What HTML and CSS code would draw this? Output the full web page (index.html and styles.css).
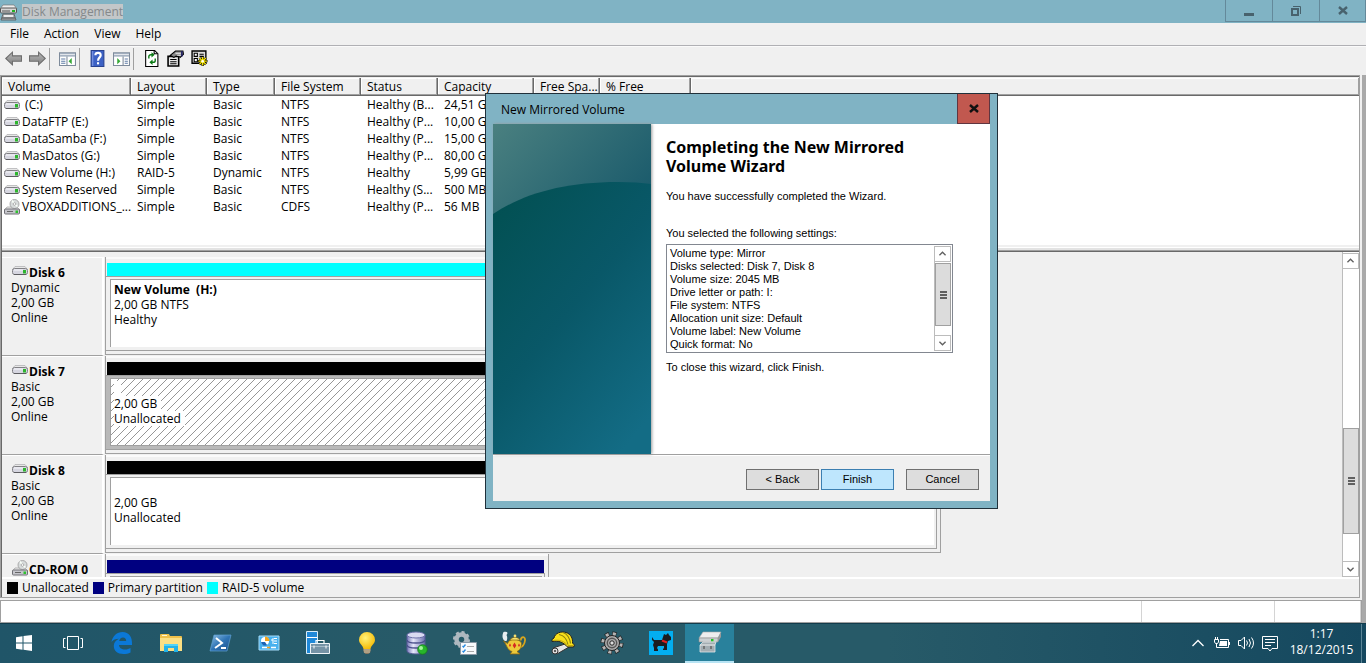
FILE: index.html
```html
<!DOCTYPE html>
<html lang="en">
<head>
<meta charset="utf-8">
<title>Disk Management</title>
<link rel="stylesheet" href="styles.css">
</head>
<body>
<svg class="defs" aria-hidden="true">
  <defs>
    <linearGradient id="db" x1="0" y1="0" x2="1" y2="0"><stop offset="0" stop-color="#7579b8"/><stop offset=".35" stop-color="#e6e7fa"/><stop offset="1" stop-color="#6a6fae"/></linearGradient>
    <radialGradient id="bulb" cx=".4" cy=".35" r=".7"><stop offset="0" stop-color="#fff27a"/><stop offset="1" stop-color="#f5b800"/></radialGradient>
    <linearGradient id="shell" x1="0" y1="0" x2="1" y2="1"><stop offset="0" stop-color="#8fc0e6"/><stop offset=".5" stop-color="#2f74b5"/><stop offset="1" stop-color="#1c4f8c"/></linearGradient>
    <linearGradient id="arrow" x1="0" y1="0" x2="0" y2="1"><stop offset="0" stop-color="#b8b8b8"/><stop offset="1" stop-color="#808080"/></linearGradient>
  </defs>
  <symbol id="drive" viewBox="0 0 16 16">
    <path d="M3 3.500h10l2.500 3H.5z" fill="#e8e8e8" stroke="#b4b4b6" stroke-width=".8"/>
    <rect x=".5" y="5.500" width="15" height="6" rx="2" fill="#d6d6e0" stroke="#808084"/>
    <path d="M2 7h9" stroke="#f8f8fc"/>
    <path d="M2 11.500h12" stroke="#5c5c60"/>
    <rect x="11" y="7" width="3" height="3.500" fill="#2db52d"/>
  </symbol>
  <symbol id="cdrom" viewBox="0 0 16 16">
    <path d="M3 8h10l2.500 3H.5z" fill="#eee" stroke="#999" stroke-width=".7"/>
    <circle cx="10.500" cy="5" r="4.500" fill="#d8dcdc" stroke="#999" stroke-width=".8"/>
    <path d="M10.500 5L8 1.500M10.500 5l3 2.500" stroke="#f8fff8" stroke-width="1.500"/>
    <circle cx="10.500" cy="5" r="1.300" fill="#fff" stroke="#888" stroke-width=".6"/>
    <rect x=".5" y="10" width="15" height="5" rx="1" fill="#c6c6cc" stroke="#707076"/>
    <path d="M3 12.500h6" stroke="#666"/>
    <rect x="11.500" y="11.500" width="2.500" height="2.500" fill="#2dc22d"/>
  </symbol>
  <symbol id="up" viewBox="0 0 16 16"><path d="M4.500 9.500L8 6l3.500 3.500" fill="none" stroke="#606060" stroke-width="1.500"/></symbol>
  <symbol id="down" viewBox="0 0 16 16"><path d="M4.500 6.500L8 10l3.500-3.500" fill="none" stroke="#606060" stroke-width="1.500"/></symbol>
</svg>

<div class="desktop">
  <header class="titlebar">
    <svg class="app-icon" viewBox="0 0 18 18"><path d="M3 2h11l3 4H0z" fill="#eee" stroke="#777" stroke-width=".7"/><rect x=".5" y="5" width="16" height="5" rx="1" fill="#d5d5d5" stroke="#555"/><path d="M2 8h8" stroke="#555"/><rect x="12" y="7" width="3" height="2" fill="#22b022"/><path d="M3 11h11l2 6H1z" fill="#aeb4b8" stroke="#555" stroke-width=".8"/><path d="M4 13h9" stroke="#fff" stroke-width="1.500"/><path d="M2 15h13" stroke="#444"/></svg>
    <h1 class="window-title">Disk Management</h1>
    <div class="window-buttons">
      <button class="win-btn" aria-label="Minimize"><svg viewBox="0 0 16 16"><path d="M3 10h10v3H3z" fill="#48626d"/></svg></button>
      <button class="win-btn" aria-label="Restore"><svg viewBox="0 0 16 16"><path d="M4 6h6v6H4z" fill="none" stroke="#48626d" stroke-width="2"/><path d="M5 3.500h7.500V11" fill="none" stroke="#48626d"/></svg></button>
      <button class="win-btn" aria-label="Close"><svg viewBox="0 0 16 16"><path d="M4 4l8 7M12 4l-8 7" stroke="#48626d" stroke-width="2.400"/></svg></button>
    </div>
  </header>

  <nav class="menubar">
    <button class="menu">File</button><button class="menu">Action</button><button class="menu">View</button><button class="menu">Help</button>
  </nav>

  <div class="toolbar">
    <button class="tool" aria-label="Back"><svg viewBox="0 0 16 16"><path d="M.7 8L7 2v3.500h8.500v5H7V14z" fill="url(#arrow)" stroke="#6e6e6e"/></svg></button>
    <button class="tool" aria-label="Forward"><svg viewBox="0 0 16 16"><path d="M15.300 8L9 2v3.500H.5v5H9V14z" fill="url(#arrow)" stroke="#6e6e6e"/></svg></button>
    <span class="tool-sep"></span>
    <button class="tool" aria-label="Show console tree"><svg viewBox="0 0 16 16"><path d="M.5 2.500h15v12H.5z" fill="#fff" stroke="#7e8b9b"/><path d="M1 3.500h14M1 5.500h14" stroke="#8a9bb0"/><path d="M7.500 6v8" stroke="#7e8b9b"/><path d="M2 8.500h4M2 10.500h4M2 12.500h4" stroke="#5e7ba5"/><path d="M12 7.500v6l-3-3z" fill="#35a835"/></svg></button>
    <span class="tool-sep"></span>
    <button class="tool" aria-label="Help"><svg viewBox="0 0 16 16"><path d="M2 .5h12v15H2z" fill="#3c61c4" stroke="#27418e"/><path d="M3.500 1v14" stroke="#7f9be6"/><path d="M6 5c0-3 5-3 5 0 0 2-2.500 2-2.500 5" fill="none" stroke="#fff" stroke-width="2"/><path d="M7.500 11.500h2v2h-2z" fill="#fff"/></svg></button>
    <button class="tool" aria-label="Show action pane"><svg viewBox="0 0 16 16"><path d="M.5 2.500h15v12H.5z" fill="#fff" stroke="#7e8b9b"/><path d="M1 3.500h14M1 5.500h14" stroke="#8a9bb0"/><path d="M9.500 6v8" stroke="#7e8b9b"/><path d="M11 8.500h3M11 10.500h3M11 12.500h3" stroke="#5e7ba5"/><path d="M4 7.500v6l3-3z" fill="#35a835"/></svg></button>
    <span class="tool-sep"></span>
    <button class="tool" aria-label="Refresh"><svg viewBox="0 0 16 16"><path d="M2.500.5H11l3 3v12H2.500z" fill="#fff" stroke="#000"/><path d="M10.500.5v3h3" fill="none" stroke="#000"/><path d="M5.500 8V6q0-1.500 2-1.500h1M11.500 8v2q0 1.500-2 1.500h-1" fill="none" stroke="#0a7a14" stroke-width="1.300"/><path d="M8 2v5l3-2.500zM9 9v5l-3-2.500z" fill="#0a7a14"/></svg></button>
    <button class="tool" aria-label="Properties"><svg viewBox="0 0 16 16"><path d="M1 6h10v9H1z" fill="#e8e8e8" stroke="#000" stroke-width="1.500"/><path d="M3 9h6M3 11h6M3 13h6" stroke="#000"/><path d="M3 5l5-4h7l.5 3-3 3-3-2-3 2z" fill="#888" stroke="#000"/><path d="M8 3h5M9 5h4" stroke="#eee"/><path d="M14 1v5" stroke="#226" stroke-width="1.500"/></svg></button>
    <button class="tool" aria-label="Settings"><svg viewBox="0 0 16 16"><path d="M1 1h13v11.500H1z" fill="#ddd" stroke="#000" stroke-width="1.300"/><path d="M3 3h3v3H3zM3 8h3v3H3z" fill="#fff" stroke="#000"/><path d="M8 4h4M8 6h4" stroke="#000"/><path d="M11 6v9M6.500 10.500h9M8 7.500l6 6M14 7.500l-6 6" stroke="#000" stroke-width="2.200"/><path d="M11 6.500v8M7 10.500h8M8 7.500l6 6M14 7.500l-6 6" stroke="#f6e400" stroke-width="1.300"/><circle cx="11" cy="10.500" r="1.200" fill="#fff"/></svg></button>
  </div>

  <div class="workspace">
    <div class="window-body">
      <main class="main">
        <section class="volumes">
          <table class="volume-table">
            <colgroup><col class="c-volume"><col class="c-layout"><col class="c-type"><col class="c-fs"><col class="c-status"><col class="c-capacity"><col class="c-free"><col class="c-pct"><col></colgroup>
            <thead><tr><th>Volume</th><th>Layout</th><th>Type</th><th>File System</th><th>Status</th><th>Capacity</th><th>Free Spa...</th><th>% Free</th><th></th></tr></thead>
            <tbody>
              <tr><td><svg class="vol-icon"><use href="#drive"/></svg>&nbsp;(C:)</td><td>Simple</td><td>Basic</td><td>NTFS</td><td>Healthy (B...</td><td>24,51 GB</td><td></td><td></td><td></td></tr>
              <tr><td><svg class="vol-icon"><use href="#drive"/></svg>DataFTP (E:)</td><td>Simple</td><td>Basic</td><td>NTFS</td><td>Healthy (P...</td><td>10,00 GB</td><td></td><td></td><td></td></tr>
              <tr><td><svg class="vol-icon"><use href="#drive"/></svg>DataSamba (F:)</td><td>Simple</td><td>Basic</td><td>NTFS</td><td>Healthy (P...</td><td>15,00 GB</td><td></td><td></td><td></td></tr>
              <tr><td><svg class="vol-icon"><use href="#drive"/></svg>MasDatos (G:)</td><td>Simple</td><td>Basic</td><td>NTFS</td><td>Healthy (P...</td><td>80,00 GB</td><td></td><td></td><td></td></tr>
              <tr><td><svg class="vol-icon"><use href="#drive"/></svg>New Volume (H:)</td><td>RAID-5</td><td>Dynamic</td><td>NTFS</td><td>Healthy</td><td>5,99 GB</td><td></td><td></td><td></td></tr>
              <tr><td><svg class="vol-icon"><use href="#drive"/></svg>System Reserved</td><td>Simple</td><td>Basic</td><td>NTFS</td><td>Healthy (S...</td><td>500 MB</td><td></td><td></td><td></td></tr>
              <tr><td><svg class="vol-icon"><use href="#cdrom"/></svg>VBOXADDITIONS_...</td><td>Simple</td><td>Basic</td><td>CDFS</td><td>Healthy (P...</td><td>56 MB</td><td></td><td></td><td></td></tr>
            </tbody>
          </table>
        </section>
        <div class="splitter"></div>
        <section class="graph">
          <div class="disks">
            <article class="disk">
              <div class="disk-label"><h2 class="disk-name"><svg class="disk-icon"><use href="#drive"/></svg>Disk 6</h2><p>Dynamic</p><p>2,00 GB</p><p>Online</p></div>
              <div class="disk-area"><div class="bar raid"></div><div class="partition"><div class="partition-box"><p class="vol-name">New Volume&nbsp; (H:)</p><p>2,00 GB NTFS</p><p>Healthy</p></div></div></div>
            </article>
            <article class="disk">
              <div class="disk-label"><h2 class="disk-name"><svg class="disk-icon"><use href="#drive"/></svg>Disk 7</h2><p>Basic</p><p>2,00 GB</p><p>Online</p></div>
              <div class="disk-area"><div class="bar unallocated"></div><div class="partition selected"><div class="partition-box hatched"><p class="blank">&nbsp;</p><p>2,00 GB</p><p>Unallocated</p></div></div></div>
            </article>
            <article class="disk">
              <div class="disk-label"><h2 class="disk-name"><svg class="disk-icon"><use href="#drive"/></svg>Disk 8</h2><p>Basic</p><p>2,00 GB</p><p>Online</p></div>
              <div class="disk-area"><div class="bar unallocated"></div><div class="partition"><div class="partition-box"><p class="blank">&nbsp;</p><p>2,00 GB</p><p>Unallocated</p></div></div></div>
            </article>
            <article class="disk">
              <div class="disk-label"><h2 class="disk-name"><svg class="disk-icon"><use href="#cdrom"/></svg>CD-ROM 0</h2></div>
              <div class="disk-area small"><div class="bar primary"></div><div class="partition"><div class="partition-box"></div></div></div>
            </article>
          </div>
          <div class="scrollbar">
            <button class="scroll-btn" aria-label="Scroll up"><svg><use href="#up"/></svg></button>
            <div class="track"><div class="thumb"><span class="grip"></span></div></div>
            <button class="scroll-btn" aria-label="Scroll down"><svg><use href="#down"/></svg></button>
          </div>
        </section>
        <div class="legend">
          <span class="key"><i class="swatch unallocated"></i>Unallocated</span>
          <span class="key"><i class="swatch primary"></i>Primary partition</span>
          <span class="key"><i class="swatch raid"></i>RAID-5 volume</span>
        </div>
      </main>
      <footer class="statusbar"><span class="pane grow"></span><span class="pane mid"></span><span class="pane last"></span></footer>
    </div>
    <div class="gutter"></div>
  </div>

  <div class="taskbar">
    <button class="task start" aria-label="Start"><svg viewBox="0 0 24 24"><path d="M4 6.200l6.500-.9V11.500H4zM11.500 5.100L20 4v7.500h-8.500zM4 12.500h6.500v6.200L4 17.800zM11.500 12.500H20V20l-8.500-1.200z" fill="#fff"/></svg></button>
    <button class="task" aria-label="Task View"><svg viewBox="0 0 24 24"><path d="M6.500 5.500h11v13h-11zM4.500 7.500h-2v9h2M19.500 7.500h2v9h-2" fill="none" stroke="#fff"/></svg></button>
    <button class="task" aria-label="Edge"><svg viewBox="0 0 24 24"><path d="M1.500 11C2.500 5 7 1 12.500 1 19 1 22.500 6 22 14H9c.2 3 2.800 4.500 6 4.500 2.200 0 4-.6 5.500-1.500v4.500C18.500 22.600 16 23 13.500 23 7.500 23 3.500 19.500 3.800 14.500 4 11.500 6 9 9 7.800 5.600 7.800 3.200 9 1.500 11zM9.200 10h7c0-2.300-1.200-3.600-3.200-3.600S9.500 7.800 9.200 10z" fill="#0b78d7"/></svg></button>
    <button class="task" aria-label="File Explorer"><svg viewBox="0 0 24 24"><path d="M1 4q0-1 1-1h8l1 2h11q1 0 1 1v14H1z" fill="#efc04a"/><path d="M1 7h22v13H1z" fill="#fbdf83"/><path d="M3 4.500h5" stroke="#fff6d0"/><path d="M5 21v-8h14v8h-4v-4H9v4z" fill="#23b3e8"/><path d="M5 13h14v2H5z" fill="#52d3f7"/></svg></button>
    <button class="task" aria-label="PowerShell"><svg viewBox="0 0 24 24"><path d="M6 4h17l-4 16H2z" fill="url(#shell)" stroke="#5fa0d2" stroke-width=".7"/><path d="M8 7l6 5-7 5" fill="none" stroke="#fff" stroke-width="2"/><path d="M13 17h5" stroke="#fff" stroke-width="2"/></svg></button>
    <button class="task" aria-label="Control Panel"><svg viewBox="0 0 24 24"><path d="M2 5h20v14H2z" fill="#48b1ee" stroke="#a5dcfa"/><circle cx="8" cy="10" r="4" fill="#fff"/><path d="M8 10V5.500a4.500 4.500 0 0 1 4.500 4.500z" fill="#f3a51d"/><path d="M8 11H4a4 4 0 0 0 6 3z" fill="#1b63b5"/><path d="M14 9h2M17 7.500h3M17 10h3M17 12.500h3M16 7v6" stroke="#fff"/><path d="M5 16.500h7M14 16.500h5" stroke="#fff" stroke-width="1.500"/><path d="M10 16.500h3" stroke="#f3a51d" stroke-width="1.500"/></svg></button>
    <button class="task" aria-label="Server Manager"><svg viewBox="0 0 24 24"><path d="M.5.500h11v22H.5z" fill="#1e88d8" stroke="#d9edf9"/><path d="M1 6.500h10" stroke="#fff"/><path d="M10 12v-2.500h8V12" fill="none" stroke="#fff" stroke-width="1.200"/><path d="M4.500 12.500h19v10h-19z" fill="#7593a6" stroke="#eef5f8"/><path d="M5 15.500h18" stroke="#a5bbc8"/><path d="M8 14.500v3M20 14.500v3" stroke="#fff"/></svg></button>
    <button class="task" aria-label="Tips"><svg viewBox="0 0 24 24"><path d="M12 1a8 8 0 0 0-8 8c0 4 4 5 4.500 9h7c.5-4 4.500-5 4.500-9a8 8 0 0 0-8-8z" fill="url(#bulb)"/><path d="M8.500 18h7v3l-2 2h-3l-2-2z" fill="#877760"/><path d="M8.500 19h7M9 21h6" stroke="#d9caa8"/></svg></button>
    <button class="task" aria-label="Database"><svg viewBox="0 0 24 24"><path d="M3 4v16c0 4 18 4 18 0V4z" fill="url(#db)" stroke="#565b94"/><ellipse cx="12" cy="4" rx="9" ry="3" fill="#d9daf2" stroke="#6a6fa8"/><path d="M3 9c0 4 18 4 18 0M3 14c0 4 18 4 18 0" fill="none" stroke="#4b508c" stroke-width="1.300"/><circle cx="18.500" cy="18.500" r="4.800" fill="#27b52a" stroke="#16781a" stroke-width=".8"/><circle cx="17" cy="17" r="2" fill="#a3f59b"/></svg></button>
    <button class="task" aria-label="Services"><svg viewBox="0 0 24 24"><circle cx="8.500" cy="8.500" r="5" fill="none" stroke="#aeb8bf" stroke-width="4.500"/><circle cx="8.500" cy="8.500" r="7.300" fill="none" stroke="#aeb8bf" stroke-width="2.500" stroke-dasharray="3 2.700"/><path d="M7.500 11.500h16v12h-16z" fill="#f8fafc" stroke="#8998a5"/><path d="M9.500 15l1 1 2-2.500M9.500 20l1 1 2-2.500" fill="none" stroke="#2688df" stroke-width="1.300"/><path d="M14 15.500h7M14 20.500h7" stroke="#aaa"/></svg></button>
    <button class="task" aria-label="Lamp"><svg viewBox="0 0 24 24"><path d="M3 10C0 8 0 4 1.500 1c4-1 5 1 3 3 1 2 1 4 0 6z" fill="#e8edf0"/><path d="M18.500 9.500c1-5 5-4 4.500 0s-2 6-5 7" fill="none" stroke="#d7a51e" stroke-width="1.800"/><path d="M1.500 10l4 2.500C7 7 17 7 19.500 12c0 5-1.500 7-4.500 8.500l3 2.500H8l2-2.500C5 19 5.500 15 1.500 10z" fill="#edc93a" stroke="#8a6510" stroke-width=".8"/><path d="M8 9c1-3.500 9-3.500 10 0z" fill="#f8e470" stroke="#8a6510" stroke-width=".7"/><circle cx="13" cy="5" r="1.400" fill="#f6df6e"/><path d="M12.500 11.500l1.800 3-1.800 3-1.800-3zM8 12.500l1 1.800-1 1.800-1-1.800zM17 12.500l1 1.800-1 1.800-1-1.800z" fill="#d42a22"/></svg></button>
    <button class="task" aria-label="Builder"><svg viewBox="0 0 24 24"><path d="M2 17l12-4 4 3L6 23z" fill="#e6e6e6" stroke="#333"/><circle cx="4" cy="20" r="3" fill="#ddd" stroke="#333"/><circle cx="4" cy="20" r="1" fill="#333"/><path d="M3 7C4 2 10 0 15 1.500 20 3 22 8 21.500 12l2 2-1 2h-6C12 11 8 9.500 1 10.500V8.500z" fill="#f9e11a" stroke="#222"/><path d="M8 3.500c5 1 8 5 9 10M12 1.500c4 1 7 6 7.500 11" fill="none" stroke="#8b8010" stroke-width="1.100"/><path d="M2 9.500c7-1 11 .5 15 5h5" fill="none" stroke="#c4a90c"/></svg></button>
    <button class="task" aria-label="System settings"><svg viewBox="0 0 24 24"><circle cx="12" cy="12" r="9" fill="none" stroke="#222" stroke-width="5" stroke-dasharray="4 3.070"/><circle cx="12" cy="12" r="9" fill="none" stroke="#b4b4b4" stroke-width="3.500" stroke-dasharray="3 4.070" stroke-dashoffset="-.5"/><circle cx="12" cy="12" r="7.500" fill="#aaa" stroke="#222"/><circle cx="12" cy="12" r="4.700" fill="none" stroke="#555" stroke-width="1.400"/><circle cx="12" cy="12" r="2.200" fill="#ddd" stroke="#222"/></svg></button>
    <button class="task" aria-label="Terrier"><svg viewBox="0 0 24 24"><path d="M0 0h24v24H0z" fill="#03aef0"/><path d="M3 6l2 3h8l1-3 1-3 2 1 2-2 1 2 2 2v3l-3 1-1 3v6h-4v-1.500h1V15H9l-1 2 1 1.500v1.500H5v-3l-1-3 1-3-2-2z" fill="#1c1c20"/><path d="M13 9.500l5 2" stroke="#e02020" stroke-width="2"/></svg></button>
    <button class="task active" aria-label="Disk Management"><svg viewBox="0 0 24 24"><path d="M5 1h18l-3 6H1z" fill="#eee" stroke="#aaa" stroke-width=".6"/><path d="M1 7h19v4H1z" fill="#ccd0d2" stroke="#888" stroke-width=".6"/><path d="M20 7l3-6v5l-3 5z" fill="#999"/><path d="M13 8h2.500v2.500H13z" fill="#22c322"/><path d="M2 14l3-3h13l-1 3v7H2z" fill="#a3adb2" stroke="#e2e6e8" stroke-width=".8"/><path d="M2 14h15" stroke="#eee"/><path d="M6 15v3M13 15v3" stroke="#666" stroke-width="1.500"/></svg></button>
    <div class="tray">
      <button class="tray-btn" aria-label="Show hidden icons"><svg viewBox="0 0 18 18"><path d="M3.500 12L9 6.500l5.500 5.500" fill="none" stroke="#fff" stroke-width="1.300"/></svg></button>
      <button class="tray-btn" aria-label="Battery"><svg viewBox="0 0 18 18"><path d="M7 5.500h8.500v8H5.500M16.500 8v3" fill="none" stroke="#fff"/><path d="M7 7h7v5H6z" fill="#fff"/><path d="M2.500 3v3M4.500 3v3M3.500 9v4.500H6" stroke="#fff" fill="none"/><path d="M1.500 5.500h4V8L4.500 9.500h-2L1.500 8z" fill="none" stroke="#fff"/></svg></button>
      <button class="tray-btn" aria-label="Volume"><svg viewBox="0 0 18 18"><path d="M1.500 6.500H4L7.500 3v12L4 11.500H1.500zM9.500 6.500q2 2.500 0 5M12 5q3 4 0 8M14.500 3.500q4 5.500 0 11" fill="none" stroke="#fff"/></svg></button>
      <button class="tray-btn" aria-label="Notifications"><svg viewBox="0 0 18 18"><path d="M1.500 2.500h15v12H11L9 17l-2-2.500H1.500z" fill="none" stroke="#fff"/><path d="M4 5.500h10M4 8.500h10M4 11.500h6" stroke="#fff"/></svg></button>
      <button class="clock"><span>1:17</span><span>18/12/2015</span></button>
      <span class="show-desktop"></span>
    </div>
  </div>

  <div class="dialog" role="dialog" aria-labelledby="dlg-title">
    <div class="dialog-title"><span id="dlg-title">New Mirrored Volume</span><button class="dialog-close" aria-label="Close"><svg viewBox="0 0 16 16"><path d="M4 4l8 7M12 4l-8 7" stroke="#111" stroke-width="2.400"/></svg></button></div>
    <div class="dialog-frame">
      <div class="wizard">
        <svg class="watermark" viewBox="0 0 158 330" preserveAspectRatio="none">
          <defs>
            <linearGradient id="wmTop" x1="0" y1="0" x2="1" y2=".7"><stop offset="0" stop-color="#4a8080"/><stop offset="1" stop-color="#17586a"/></linearGradient>
            <linearGradient id="wmLow" x1=".1" y1="0" x2=".8" y2="1"><stop offset="0" stop-color="#025052"/><stop offset=".5" stop-color="#095868"/><stop offset="1" stop-color="#136c85"/></linearGradient>
          </defs>
          <path d="M0 0h158v120H0z" fill="url(#wmTop)"/>
          <path d="M0 90C30 70 70 58 125 58q20 0 33 2v270H0z" fill="url(#wmLow)"/>
        </svg>
        <div class="wizard-text">
          <h2 class="wizard-heading">Completing the New Mirrored Volume Wizard</h2>
          <p class="wizard-done">You have successfully completed the Wizard.</p>
          <label class="wizard-label" for="settings">You selected the following settings:</label>
          <div class="settings-box">
            <textarea class="settings" id="settings" readonly>Volume type: Mirror
Disks selected: Disk 7, Disk 8
Volume size: 2045 MB
Drive letter or path: I:
File system: NTFS
Allocation unit size: Default
Volume label: New Volume
Quick format: No</textarea>
            <div class="scrollbar inner">
              <button class="scroll-btn" aria-label="Scroll up"><svg><use href="#up"/></svg></button>
              <div class="track"><div class="thumb"><span class="grip"></span></div></div>
              <button class="scroll-btn" aria-label="Scroll down"><svg><use href="#down"/></svg></button>
            </div>
          </div>
          <p class="wizard-close">To close this wizard, click Finish.</p>
        </div>
      </div>
      <div class="dialog-actions"><button class="btn">&lt; Back</button><button class="btn primary-btn">Finish</button><button class="btn cancel">Cancel</button></div>
    </div>
  </div>
</div>
</body>
</html>
```
FILE: styles.css
```css
* { box-sizing: border-box; }
body, h1, h2, p { margin: 0; }
body { font: 12px/15px "Open Sans", "Noto Sans", sans-serif; color: #000; background: #f0f0f0; }
button { padding: 0; border: 0; background: none; font: inherit; color: inherit; }
svg { display: block; flex: none; }
.defs { position: absolute; width: 0; height: 0; }

.desktop { position: relative; display: flex; flex-direction: column; height: 100vh; overflow: hidden; }

.titlebar { display: flex; align-items: center; height: 23px; background: #80b3c4; flex: none; }
.app-icon { width: 18px; height: 18px; margin-right: 4px; }
.window-title { background: #c3c7c9; color: #85898b; font-size: 12px; font-weight: 400; line-height: 15px; }
.window-buttons { display: flex; margin-left: auto; align-self: flex-start; }
.win-btn { display: flex; align-items: center; justify-content: center; width: 47px; height: 22px; border: solid #64899a; border-width: 0 0 1px 1px; }
.win-btn:last-child { border-right-width: 1px; }
.win-btn svg { width: 16px; height: 16px; }

.menubar { display: flex; align-items: center; gap: 15px; height: 23px; padding-left: 10px; padding-bottom: 1px; border-bottom: 1px solid #b0b0b4; flex: none; }

.toolbar { display: flex; align-items: center; gap: 7px; height: 29px; padding-left: 5px; padding-bottom: 5px; border-top: 1px solid #fafafa; flex: none; }
.tool svg { width: 17px; height: 17px; }
.tool-sep { width: 1px; height: 22px; margin: 0 2px 0 -4px; background: #a0a0a0; }

.workspace { flex: 1; display: flex; min-height: 0; }
.window-body { flex: 1; display: flex; flex-direction: column; min-width: 0; }
.gutter { width: 4px; background: #a9a9a9; }
.main { flex: 1; display: flex; flex-direction: column; min-height: 0; margin-right: 2px; border: 1px solid #a0a0a0; box-shadow: inset 1px 1px #696969; padding: 2px 0 0 1px; }

.volumes { flex: none; height: 167px; background: #fff; }
.volume-table { width: 100%; border-collapse: separate; border-spacing: 0; table-layout: fixed; }
.c-volume { width: 129px; }
.c-layout { width: 76px; }
.c-type { width: 68px; }
.c-fs { width: 86px; }
.c-status { width: 77px; }
.c-capacity { width: 96px; }
.c-free { width: 66px; }
.c-pct { width: 91px; }
.volume-table th { height: 18px; padding: 0 0 0 6px; background: #f0f0f0; border: solid #696969; border-width: 0 1px 1px 0; box-shadow: inset -1px -1px #a0a0a0, inset 1px 1px #fff; font-weight: 400; text-align: left; white-space: nowrap; overflow: hidden; }
.volume-table th:last-child { border-right: 0; }
.volume-table td { height: 17px; padding: 0 0 0 6px; white-space: nowrap; overflow: hidden; }
.volume-table td:first-child { display: flex; align-items: center; gap: 2px; padding-left: 2px; }
.vol-icon { width: 16px; height: 16px; }

.splitter { height: 7px; flex: none; background: #e3e3e3; border-top: 2px solid #f0f0f0; border-bottom: 1px solid #696969; box-shadow: inset 0 1px #fff, inset 0 -1px #a0a0a0; }

.graph { flex: 1; display: flex; min-height: 0; }
.disks { flex: 1; padding-top: 5px; overflow: hidden; }
.disk { display: grid; grid-template-columns: 103px 1fr; height: 99px; }
.disk-label { margin-right: 1px; padding: 7px 0 0 9px; border: solid #fff; border-width: 1px 2px 0 0; border-bottom: 1px solid #a0a0a0; }
.disk-name { display: flex; align-items: center; gap: 1px; height: 15px; padding-left: 1px; font-size: 12px; line-height: 15px; font-weight: 700; white-space: nowrap; }
.disk-icon { width: 16px; height: 16px; margin-bottom: 4px; }
.disk-area { display: flex; flex-direction: column; width: 67.6%; margin-bottom: 1px; padding: 6px 3px 3px 0; border: solid #a0a0a0; border-width: 0 1px 1px 1px; box-shadow: inset 0 2px #fafafa; }
.disk-area.small { width: 35.9%; }
.bar { height: 13px; margin: 0 1px; flex: none; }
.unallocated { background: #000; }
.primary { background: #000080; }
.raid { background: #00ffff; }
.partition { flex: 1; display: flex; padding: 2px 2px 3px 4px; border: solid #a0a0a0; border-width: 1px 1px 1px 0; }
.partition.selected { background: #b9b9b9; }
.partition-box { flex: 1; padding: 2px 0 0 3px; border: solid #a0a0a0; border-width: 1px 0 0 1px; background-color: #fff; }
.partition-box p { width: max-content; padding-right: 4px; background: #fff; }
.vol-name { font-weight: 700; }
.hatched { background-image: linear-gradient(135deg, transparent 46%, #969696 46%, #969696 54%, transparent 54%); background-size: 8px 8px; border-width: 1px; }

.scrollbar { display: flex; flex-direction: column; width: 17px; padding-top: 1px; background: #fff; border-left: 1px solid #bcbcbc; }
.scroll-btn { height: 16px; border: solid #bcbcbc; border-width: 1px 1px 1px 0; background: #fff; }
.scroll-btn svg { width: 15px; height: 14px; }
.track { flex: 1; display: flex; flex-direction: column; justify-content: flex-end; padding-bottom: 27px; }
.thumb { display: flex; align-items: center; justify-content: center; height: 106px; background: #dcdcdc; border: 1px solid #a0a0a0; }
.grip { width: 7px; height: 8px; background: repeating-linear-gradient(#606060 0 2px, transparent 2px 3px); }

.legend { display: flex; gap: 4px; align-items: center; height: 20px; padding-left: 5px; padding-bottom: 1px; border-top: 2px solid #fff; flex: none; }
.key { display: flex; align-items: center; gap: 4px; }
.swatch { width: 11px; height: 12px; }

.statusbar { display: flex; height: 23px; margin-top: 2px; flex: none; background: #fff; border: 1px solid #a0a0a0; }
.pane { border-right: 1px solid #d4d4d4; }
.grow { flex: 1; }
.mid { width: 133px; }
.last { width: 86px; }

.taskbar { display: flex; flex: none; height: 40px; background: linear-gradient(90deg, #205568, #275a68 30%, #275a68 65%, #15485f); border-top: 1px solid #123c4c; }
.task { display: flex; align-items: center; justify-content: center; width: 49px; padding-bottom: 2px; }
.task.start { width: 48px; }
.task svg { width: 24px; height: 24px; }
.task.active { padding-bottom: 0; background: #29819c; border-bottom: 2px solid #b8e4f4; }
.tray { display: flex; margin-left: auto; align-items: stretch; color: #fff; }
.tray-btn { display: flex; align-items: center; justify-content: center; width: 24px; padding-bottom: 2px; }
.tray-btn svg { width: 18px; height: 18px; }
.clock { display: flex; flex-direction: column; align-items: center; justify-content: center; width: 79px; padding-bottom: 4px; line-height: 16px; }
.show-desktop { width: 5px; border-left: 1px solid #5b8596; }

.dialog { position: absolute; left: 485px; top: 93px; width: 513px; border: 1px solid #20303a; background: #80b3c4; padding: 0 7px 7px; color: #000; }
.dialog-title { display: flex; justify-content: space-between; align-items: center; height: 30px; padding-left: 8px; }
.dialog-close { display: flex; align-items: center; justify-content: center; width: 33px; height: 30px; background: #c1584f; border: solid #5f3540; border-width: 0 1px 1px; }
.dialog-close svg { width: 16px; height: 16px; }
.dialog-frame { font: 11px/13px "Liberation Sans", Arial, sans-serif; background: #fff; }
.wizard { display: flex; height: 330px; }
.watermark { width: 158px; height: 330px; box-shadow: 1px 0 3px #999; }
.wizard-text { flex: 1; padding: 14px 37px 0 15px; }
.wizard-heading { width: 270px; font: 700 16px/19px "Noto Sans", "Open Sans", sans-serif; }
.wizard-done { margin-top: 14px; }
.wizard-label { display: block; margin-top: 24px; }
.settings-box { display: flex; height: 109px; margin-top: 4px; padding: 1px; border: 1px solid #828790; }
.settings { flex: 1; min-width: 0; padding: 1px 2px; border: 0; resize: none; overflow: hidden; font: inherit; color: inherit; background: #fff; outline: 0; }
.inner { padding: 0; }
.inner .track { padding-bottom: 9px; }
.inner .thumb { height: 63px; }
.wizard-close { margin-top: 8px; }
.dialog-actions { display: flex; justify-content: flex-end; gap: 2px; padding: 14px 11px 11px; background: #f0f0f0; border-top: 1px solid #a0a0a0; box-shadow: inset 0 1px #fff; }
.btn { width: 73px; height: 21px; border: 1px solid #707070; background: #dddddd; }
.primary-btn { background: #bee6fd; border-color: #3c7fb1; }
.cancel { margin-left: 10px; }
```
